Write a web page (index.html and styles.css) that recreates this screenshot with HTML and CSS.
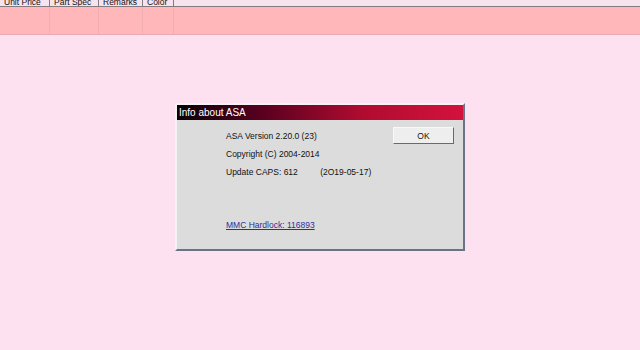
FILE: index.html
```html
<!DOCTYPE html>
<html lang="en">
<head>
    <meta charset="UTF-8">
    <title>ASA</title>
    <link rel="stylesheet" href="styles.css">
</head>
<body>
    <div class="grid">
        <div class="gridHead">
            <div class="cell c1"><span>Unit Price</span></div>
            <div class="cell c2"><span>Part Spec</span></div>
            <div class="cell c3"><span>Remarks</span></div>
            <div class="cell c4"><span>Color</span></div>
            <div class="cell rest"></div>
        </div>
        <div class="gridRow">
            <div class="cell c1"></div>
            <div class="cell c2"></div>
            <div class="cell c3"></div>
            <div class="cell c4"></div>
            <div class="cell rest"></div>
        </div>
    </div>

    <div class="stage">
        <div class="dialog">
            <div class="titleBar">Info about ASA</div>
            <div class="dialogBody">
                <div class="info">
                    <p>ASA Version 2.20.0 (23)</p>
                    <p>Copyright (C) 2004-2014</p>
                    <p>Update CAPS: 612 <span class="date">(2O19-05-17)</span></p>
                    <a href="#" class="hardlock">MMC Hardlock: 116893</a>
                </div>
                <button class="okButton">OK</button>
            </div>
        </div>
    </div>
</body>
</html>
```

FILE: styles.css
```css
body {
    margin: 0;
    background-color: #fde1f1;
    font-family: 'Liberation Sans', Arial, sans-serif;
    font-size: 8.5px;
    color: #111;
    height: 350px;
    overflow: hidden;
}

.gridHead, .gridRow {
    display: flex;
}

.gridHead {
    height: 6px;
    background-color: #f7e3ee;
    border-bottom: 1px solid #857a80;
}

.gridHead .cell {
    display: flex;
    align-items: flex-end;
    overflow: hidden;
    border-right: 1px solid #857a80;
}

.gridHead .cell span {
    display: block;
    line-height: 10px;
    margin-bottom: -1px;
    padding-left: 4px;
    white-space: nowrap;
}

.gridHead .rest {
    border-right: none;
}

.gridRow {
    height: 27px;
    background-color: #ffb7b9;
    border-bottom: 1px solid #eaaab4;
}

.gridRow .cell {
    border-right: 1px solid #f2adb0;
}

.gridRow .rest {
    border-right: none;
}

.c1 { width: 49px; }
.c2 { width: 48px; }
.c3 { width: 43px; }
.c4 { width: 30px; }
.rest { flex: 1; }

.stage {
    display: flex;
    justify-content: center;
    padding-top: 68px;
}

.dialog {
    width: 286px;
    height: 144px;
    background-color: #dcdcdc;
    border: 2px solid;
    border-color: #f4f2f4 #6c7285 #6c7285 #f4f2f4;
    display: flex;
    flex-direction: column;
}

.titleBar {
    height: 15px;
    line-height: 15px;
    padding-left: 2px;
    color: #fff;
    font-size: 10px;
    background: linear-gradient(to right, #0a0006 0%, #5a0020 30%, #b00c30 65%, #d4123c 100%);
}

.dialogBody {
    flex: 1;
    display: flex;
    padding: 10px 9px 0 49px;
}

.info {
    flex: 1;
    line-height: 12px;
}

.info p {
    margin: 0 0 6px 0;
}

.date {
    margin-left: 20px;
}

.hardlock {
    display: inline-block;
    margin-top: 35px;
    color: #2e2e9a;
}

.okButton {
    width: 61px;
    height: 17px;
    margin-top: -3px;
    padding: 0;
    background-color: #eeeeee;
    border: 1px solid;
    border-color: #f8f8f8 #6a6a6a #6a6a6a #f8f8f8;
    font-family: 'Liberation Sans', Arial, sans-serif;
    font-size: 8.5px;
    color: #111;
}
```
